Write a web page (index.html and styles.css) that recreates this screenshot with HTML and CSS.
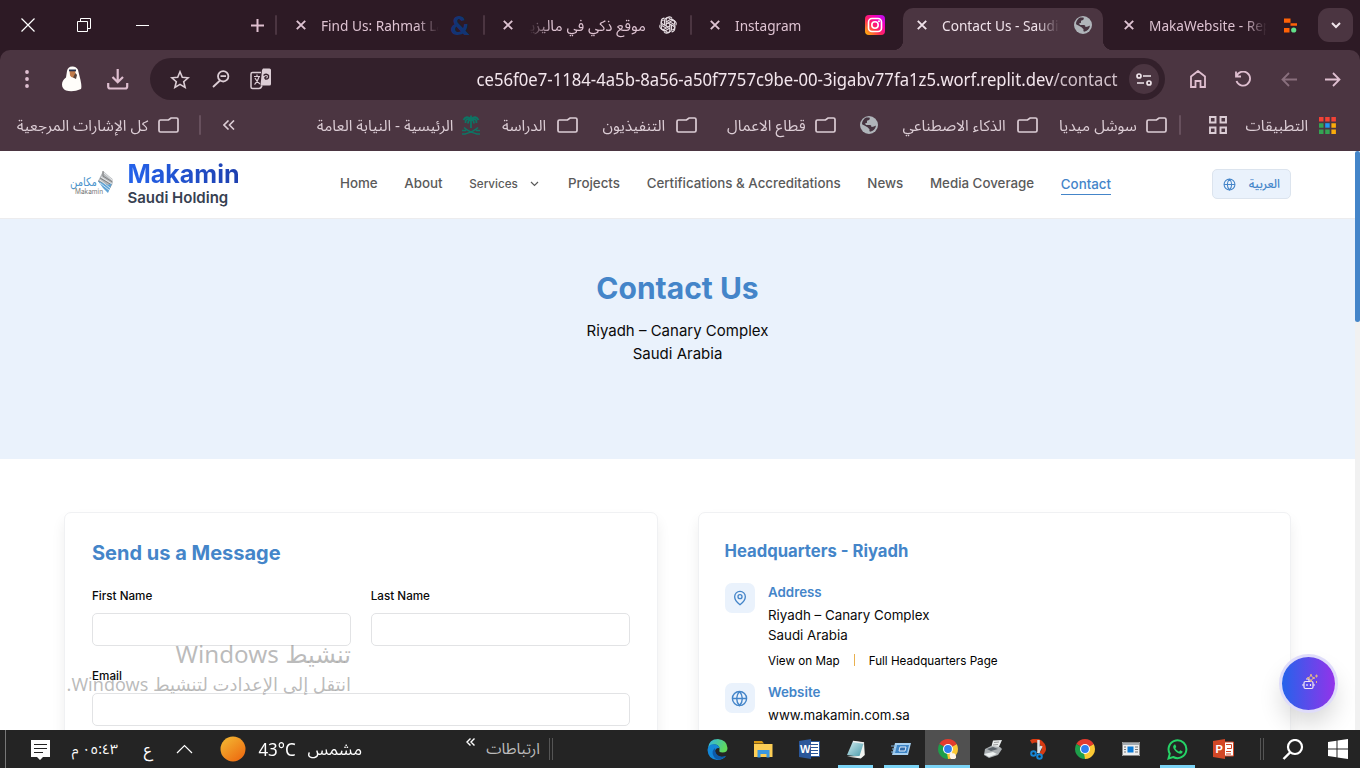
FILE: index.html
```html
<!DOCTYPE html>
<html lang="en">
<head>
<meta charset="utf-8">
<title>Contact Us - Saudi Holding</title>
<link rel="stylesheet" href="styles.css">
</head>
<body>
<svg width="0" height="0" class="defs">
  <defs>
    <linearGradient id="ig" x1="0" y1="1" x2="1" y2="0"><stop offset="0" stop-color="#ffc400"/><stop offset=".4" stop-color="#ff2a55"/><stop offset=".7" stop-color="#f500b5"/><stop offset="1" stop-color="#b010ff"/></linearGradient>
    <linearGradient id="sun" x1="0" y1="0" x2=".8" y2="1"><stop offset="0" stop-color="#f3bd35"/><stop offset="1" stop-color="#ee6a10"/></linearGradient>
    <linearGradient id="edge" x1="0" y1="0" x2="1" y2=".4"><stop offset="0" stop-color="#2fb4ea"/><stop offset="1" stop-color="#60d95a"/></linearGradient>
    <linearGradient id="note" x1="0" y1="0" x2="1" y2="1"><stop offset="0" stop-color="#d8f0f4"/><stop offset="1" stop-color="#4095a5"/></linearGradient>
    <symbol id="x" viewBox="0 0 10 10"><path d="M.8.8l8.4 8.4M9.2.8L.8 9.200" stroke="currentColor" stroke-width="1.9" fill="none"/></symbol>
    <symbol id="folder" viewBox="0 0 21 16"><path d="M1 4.500q0-1.500 1.500-1.500h8L13 1h5.500q1.500 0 1.500 1.500v11q0 1.500-1.500 1.500h-16Q1 15 1 13.500z" fill="none" stroke="currentColor" stroke-width="1.700"/></symbol>
    <symbol id="earth" viewBox="0 0 18 18"><circle cx="9" cy="9" r="9" fill="#b0b5ba"/><path d="M2 8q0-4 4-6.500h3.500q1 1.500-.5 2.500l-2 .8v2l-2 .7 1 1.500h4q1.500 0 1.500 2l2.500-.5q1-1 2-.8-1 5-6 6-1-1-.5-2.500l-2-2-3.500-2q-1.500-.2-2-1.200z" fill="#463440"/></symbol>
    <symbol id="chrome" viewBox="0 0 20 20"><path d="M10 10L1.340 5A10 10 0 0 1 18.660 5z" fill="#e33b2e"/><path d="M10 10L18.660 5A10 10 0 0 1 10 20z" fill="#fcc934"/><path d="M10 10L10 20A10 10 0 0 1 1.340 5z" fill="#1e9e4a"/><path d="M10 5h8.660L10 10z" fill="#e33b2e"/><path d="M14.500 12.500L10 20l-1-6z" fill="#fcc934"/><circle cx="10" cy="10" r="5" fill="#fff"/><circle cx="10" cy="10" r="3.900" fill="#2f7ef0"/></symbol>
    <symbol id="globe" viewBox="0 0 24 24"><g fill="none" stroke="currentColor" stroke-width="2"><circle cx="12" cy="12" r="10"/><path d="M2 12h20M12 2a14.500 14.500 0 0 0 0 20 14.500 14.500 0 0 0 0-20"/></g></symbol>
  </defs>
</svg>

<header class="browser">
  <div class="tabstrip">
    <svg class="ico white" width="14" height="14"><path d="M.5.5l13 13M13.500.5l-13 13" stroke="currentColor" stroke-width="1.200"/></svg>
    <svg class="ico white" width="14" height="14"><path d="M.5 3.500h10v10h-10zM3.500 3.500v-3h10v10h-3" fill="none" stroke="currentColor"/></svg>
    <svg class="ico white" width="13" height="14"><path d="M0 7.500h13" stroke="currentColor"/></svg>
    <svg class="ico pink plus" width="13" height="13"><path d="M6.500 0v13M0 6.500h13" stroke="currentColor" stroke-width="2"/></svg>
    <i class="sep"></i>
    <div class="tab"><svg class="ico" width="10" height="10"><use href="#x"/></svg><span class="ttl"><b class="lat">Find Us: Rahmat La</b></span><span class="amp">&amp;</span></div>
    <i class="sep"></i>
    <div class="tab"><svg class="ico" width="10" height="10"><use href="#x"/></svg><span class="ttl rtl"><b class="ar">موقع ذكي في ماليزيا</b></span>
      <svg class="ico" width="18" height="18" viewBox="0 0 24 24"><g fill="none" stroke="#e5dce1" stroke-width="1.500"><path id="p" d="M12 9.200L9.500 10.700V5.500a4.300 4.300 0 0 1 8-2.200M9.500 8l5-2.900a4.300 4.300 0 0 1 6 5.500"/><use href="#p" transform="rotate(60 12 12)"/><use href="#p" transform="rotate(120 12 12)"/><use href="#p" transform="rotate(180 12 12)"/><use href="#p" transform="rotate(240 12 12)"/><use href="#p" transform="rotate(300 12 12)"/></g></svg></div>
    <i class="sep"></i>
    <div class="tab"><svg class="ico" width="10" height="10"><use href="#x"/></svg><span class="ttl"><b class="lat">Instagram</b></span>
      <svg class="ico" width="20" height="20"><rect width="20" height="20" rx="4" fill="url(#ig)"/><g fill="none" stroke="#fff" stroke-width="1.600"><rect x="3.500" y="3.500" width="13" height="13" rx="3.500"/><circle cx="10" cy="10" r="3.200"/></g><circle cx="14" cy="6.200" r="1" fill="#fff"/></svg></div>
    <i></i>
    <div class="tab active"><svg class="ico" width="10" height="10"><use href="#x"/></svg><span class="ttl"><b class="lat">Contact Us - Saudi</b></span><svg class="ico" width="18" height="18"><use href="#earth"/></svg></div>
    <i></i>
    <div class="tab"><svg class="ico" width="10" height="10"><use href="#x"/></svg><span class="ttl"><b class="lat">MakaWebsite - Rep</b></span>
      <svg class="ico replit" width="13" height="15"><path d="M0 .5h6.500v4.300H0zM6.500 5.300H13v2.500H6.500zM0 10h5.500v4.500H0z" fill="#ff6207"/><circle cx="9.700" cy="12" r="2.600" fill="#62e08a"/></svg></div>
    <i></i>
    <div class="menu-btn"><svg width="10" height="7"><path d="M1 1l4 4 4-4" fill="none" stroke="#efe4ea" stroke-width="2"/></svg></div>
  </div>

  <div class="panel">
    <div class="toolbar">
      <svg class="ico pink dots" width="4" height="18"><circle cx="2" cy="2" r="1.900"/><circle cx="2" cy="9" r="1.900"/><circle cx="2" cy="16" r="1.900"/></svg>
      <svg class="ico" width="20" height="26"><path d="M5 5Q6 0 11 0.500q5 .5 5.500 5.500l2 8q1.500 7 .5 9-8 3.500-15 1.500-4-2-4-6 0-4 4-7z" fill="#fffdfa"/><path d="M7.500 4.500h6l-.5 6q-3 2.500-5-1z" fill="#c07a4a"/><path d="M7 3.500h7v1.800H7z" fill="#27334f"/><path d="M13.500 7l1.500 2-1 4-3-1.500" fill="#59453d"/></svg>
      <svg class="ico pink" width="22" height="21"><path d="M10.700 0v13M5.500 8l5.200 5.200L16 8M1.200 14v3.500q0 2 2 2h15q2 0 2-2V14" fill="none" stroke="currentColor" stroke-width="2.200"/></svg>
      <div class="omnibox">
        <svg class="ico" width="20" height="19"><path d="M10 1.800l2.300 5.500 5.900.5-4.500 3.900 1.400 5.700-5.100-3-5.100 3 1.400-5.700-4.500-3.900 5.900-.5z" fill="none" stroke="currentColor" stroke-width="1.600"/></svg>
        <svg class="ico" width="18" height="18"><path d="M8 10.500L1 17M8.500 6.200h5.500" stroke="currentColor" stroke-width="1.800"/><circle cx="11.200" cy="6.300" r="5.200" fill="none" stroke="currentColor" stroke-width="1.800"/></svg>
        <svg class="ico translate" width="22" height="22"><path d="M11 4.500H2.500Q1 4.500 1 6v13q0 1.500 1.500 1.500H9q2 0 3-3" fill="none" stroke="currentColor" stroke-width="1.500"/><path d="M13 .5h6.500Q21 .5 21 2v14q0 1.500-1.500 1.500H10.500L12 2z" fill="currentColor"/><path d="M13.500 7.500q3-2.500 5 0 .5 4-3 3.500-1.800-1.500 1.200-2.500" fill="none" stroke="#33202b" stroke-width="1.400"/><path d="M4 8.500h6M7 6.500v2M9 9q-1.500 5-4.500 7.500M5 10q2 4 5 6" fill="none" stroke="currentColor" stroke-width="1.200"/></svg>
        <span class="url"><b>ce56f0e7-1184-4a5b-8a56-a50f7757c9be-00-3igabv77fa1z5.worf.replit.dev<em>/contact</em></b></span>
        <span class="site"><svg width="16" height="13"><g fill="none" stroke="#f0e6eb" stroke-width="1.700"><circle cx="3" cy="3" r="2"/><path d="M7 3h8M1 10h7"/><circle cx="13" cy="10" r="2"/></g></svg></span>
      </div>
      <svg class="ico pink" width="16" height="18"><path d="M1 6.500L8 1l7 5.500V17h-4.500v-6h-5v6H1z" fill="none" stroke="currentColor" stroke-width="1.800"/></svg>
      <svg class="ico pink" width="17" height="17"><path d="M1 .5v5h5M1.500 5.200A7 7 0 1 1 1.500 10" fill="none" stroke="currentColor" stroke-width="1.800"/></svg>
      <svg class="ico dim" width="16" height="15"><path d="M16 7.500H1.500M8 1L1.500 7.500 8 14" fill="none" stroke="currentColor" stroke-width="1.800"/></svg>
      <svg class="ico pink" width="16" height="15"><path d="M0 7.500h14.500M8 1l6.500 6.500L8 14" fill="none" stroke="currentColor" stroke-width="1.800"/></svg>
    </div>
    <div class="bookmarks">
      <span class="bm"><b class="ar">كل الإشارات المرجعية</b></span><svg class="ico" width="21" height="16"><use href="#folder"/></svg>
      <i class="sep"></i>
      <svg class="ico" width="12" height="10"><path d="M5.500.5L1 5l4.500 4.500M11 .5L6.500 5 11 9.500" fill="none" stroke="currentColor" stroke-width="1.600"/></svg>
      <span class="bm"><b class="ar">الرئيسية - النيابة العامة</b></span>
      <svg class="ico" width="20" height="20"><g fill="none" stroke="#0e7464" stroke-width="1.500"><path d="M10 13V5M10 4Q5 0 2.500 5M10 4q5-4 7.500 1M10 4Q4 3 4.500 8M10 4q6-1 5.500 4M10 4Q7 5 7 8.500M10 4q3 1 3 4.500M10 4V.5" stroke-width="1.800"/><path d="M3 12.500q4 4 13 6.500h3M17 12.500q-4 4-13 6.500H1M1 15.500h4M15 15.500h4"/></g></svg>
      <span class="bm"><b class="ar">الدراسة</b></span><svg class="ico" width="21" height="16"><use href="#folder"/></svg>
      <span class="bm"><b class="ar">التنفيذيون</b></span><svg class="ico" width="21" height="16"><use href="#folder"/></svg>
      <span class="bm"><b class="ar">قطاع الاعمال</b></span><svg class="ico" width="21" height="16"><use href="#folder"/></svg>
      <svg class="ico" width="18" height="18"><use href="#earth"/></svg>
      <span class="bm"><b class="ar">الذكاء الاصطناعي</b></span><svg class="ico" width="21" height="16"><use href="#folder"/></svg>
      <span class="bm"><b class="ar">سوشل ميديا</b></span><svg class="ico" width="21" height="16"><use href="#folder"/></svg>
      <i class="sep"></i>
      <svg class="ico" width="18" height="18"><path d="M1 1h5.500v5.500H1zM11.500 1H17v5.500h-5.500zM1 11.500h5.500V17H1zM11.500 11.500H17V17h-5.500z" fill="none" stroke="currentColor" stroke-width="1.900"/></svg>
      <span class="bm"><b class="ar">التطبيقات</b></span>
      <svg class="ico" width="17" height="17"><path d="M0 0h4.500v4.500H0zM6.200 0h4.500v4.500H6.200zM12.400 0h4.500v4.500h-4.500z" fill="#f34236"/><path d="M0 6.200h4.500v4.500H0zM0 12.400h4.500v4.500H0zM6.200 12.400h4.500v4.500H6.200z" fill="#34a353"/><path d="M6.200 6.200h4.500v4.500H6.200z" fill="#2196f3"/><path d="M12.400 6.200h4.500v4.500h-4.500zM12.400 12.400h4.500v4.500h-4.500z" fill="#fbab0b"/></svg>
    </div>
  </div>
</header>

<main class="viewport">
  <div class="page">
    <div class="nav">
      <a class="brand">
        <svg width="43" height="28" viewBox="0 0 43 28"><text x="0" y="16" class="logo-ar" textLength="27" lengthAdjust="spacingAndGlyphs">مكامن</text><text x="5" y="24" class="logo-en" textLength="28" lengthAdjust="spacingAndGlyphs">Makamin</text><path d="M33 1l9.500 8v5L38 22l-.5-6L28 11z" fill="#b4b8bc"/><path d="M33 1v5l9.500 6M30 8l12 7M28 11l13 6" stroke="#808080" fill="none"/><path d="M28 11l10 4 4-2-4 10-5-5z" fill="#5ea3d6"/><path d="M34 3l8 7M31 7l11 7M30 10l10 8M30 13l9 7" stroke="#fff" stroke-width=".7"/></svg>
        <span class="brand-text"><strong>Makamin</strong><small>Saudi Holding</small></span>
      </a>
      <nav class="links">
        <a>Home</a><a>About</a><a class="services">Services <svg width="9" height="6"><path d="M1 1l3.500 3.500L8 1" fill="none" stroke="currentColor" stroke-width="1.200"/></svg></a><a>Projects</a><a>Certifications &amp; Accreditations</a><a>News</a><a>Media Coverage</a><a class="current">Contact</a>
      </nav>
      <button class="lang"><svg width="13" height="13"><use href="#globe"/></svg><b class="ar">العربية</b></button>
    </div>
    <section class="hero">
      <h1>Contact Us</h1>
      <p>Riyadh – Canary Complex<br>Saudi Arabia</p>
    </section>
    <section class="cards">
      <form class="card">
        <h2>Send us a Message</h2>
        <div class="row">
          <label>First Name<input></label>
          <label>Last Name<input></label>
        </div>
        <label>Email<input></label>
      </form>
      <div class="card office-card">
        <h3>Headquarters - Riyadh</h3>
        <div class="info">
          <span class="badge"><svg width="16" height="16" viewBox="0 0 24 24" fill="none" stroke="currentColor" stroke-width="2"><path d="M20 10c0 6-8 12-8 12s-8-6-8-12a8 8 0 0 1 16 0"/><circle cx="12" cy="10" r="3"/></svg></span>
          <div><h4>Address</h4><p>Riyadh – Canary Complex<br>Saudi Arabia</p><div class="more"><a>View on Map</a><i></i><a>Full Headquarters Page</a></div></div>
        </div>
        <div class="info">
          <span class="badge"><svg width="17" height="17"><use href="#globe"/></svg></span>
          <div><h4>Website</h4><p>www.makamin.com.sa</p></div>
        </div>
      </div>
    </section>
  </div>
  <div class="scrollbar"><div class="thumb"></div></div>
  <div class="watermark"><p class="big">تنشيط Windows</p><p class="small">انتقل إلى الإعدادت لتنشيط Windows.</p></div>
  <div class="chat"><svg width="18" height="18"><g fill="none" stroke="#f3e8f4" stroke-width="1.200"><rect x="3" y="8.500" width="9" height="7" rx="1.500"/><path d="M1 12h2M12 12h2M6 11v2M9.500 11v2M5 6h3v2.500"/></g><path d="M10 1l1 3 3 1-3 1-1 3-1-3-3-1 3-1zM15.500 1.500v3M14 3h3M15.500 8v2" fill="none" stroke="#dcb08c"/></svg></div>
</main>

<footer class="taskbar">
  <i class="edge"></i>
  <svg class="ico note" width="21" height="21"><path d="M1 1h19v17h-7l-3 3-3-3H1z" fill="#fff"/><path d="M4 5.500h13M4 9.500h13M4 13.500h9" stroke="#222" stroke-width="1.100"/></svg>
  <span class="rt clock"><b class="ar">٠٥:٤٣ م</b></span>
  <span class="rt lg"><b class="ar">ع</b></span>
  <svg class="ico" width="17" height="10"><path d="M1 9l7.500-7.500L16 9" fill="none" stroke="#fff" stroke-width="1.200"/></svg>
  <svg class="ico" width="26" height="26"><circle cx="13" cy="13" r="12.500" fill="url(#sun)"/></svg>
  <span class="temp"><b>43°C</b></span>
  <span class="rt sunny"><b class="ar">مشمس</b></span>
  <svg class="ico more-links" width="9" height="8"><path d="M4.500.5L1 4l3.500 3.500M8.500.5L5 4l3.500 3.500" fill="none" stroke="#fff" stroke-width="1.400"/></svg>
  <span class="rt grey"><b class="ar">ارتباطات</b></span>
  <i class="dbl"></i>
  <div class="apps">
    <span><svg width="21" height="21"><path d="M1 9Q2 0 11 0q9 1 9.500 9 0 4.500-5 4.500-4 0-3-2.500Q13 6 8 5.500 3 5.500 1 9z" fill="url(#edge)"/><path d="M.5 11Q1 5 7 5.200q5 .3 5.500 4Q9 8.500 8 12q0 5 6 6 3 0 5-1-3 4-9 4Q1 20 .5 11z" fill="#1387d8"/><path d="M8 9q-4 3-1.500 8 2 4 6 3.700 4-.8 6.500-3.700-5 1.500-8-.5Q7.500 14 8 9z" fill="#0d5aa8"/></svg></span>
    <span><svg width="19" height="17"><path d="M0 0h8l2 2.500H0z" fill="#d99a13"/><path d="M0 3h18.500v13H0z" fill="#fdce55"/><path d="M3.500 16.500V9h12v7.500h-3V13h-6v3.500z" fill="#3b98e0"/></svg></span>
    <span><svg width="21" height="20"><path d="M11 2.500h9.500v15H11z" fill="#fff" stroke="#2b579a"/><path d="M12 5.500h7M12 8.500h7M12 11.500h7M12 14.500h7" stroke="#2b579a"/><path d="M0 2L12 0v20L0 18z" fill="#2b579a"/><text x="1" y="14" class="office">W</text></svg></span>
    <span class="open two"><svg width="19" height="19"><path d="M7 1l11 1.500-3 14.500L1 15z" fill="url(#note)"/><path d="M18 2l.8 13-4 3.500L1 16.500l12.500-.5z" fill="#f0f3f0"/><path d="M7 1.500l11 1.500" stroke="#efefef" stroke-width="1.500"/></svg></span>
    <span class="open"><svg width="21" height="14"><path d="M4 1h16l-3 12H1z" fill="#a6cff0"/><path d="M6 3h12l-2 8H4z" fill="#3d84c6"/><path d="M9 5h6l-1 4H8z" fill="#316ba9" stroke="#dceafa"/><path d="M0 4h6M1 7h4M0 10h4" stroke="#7fb2dc"/></svg></span>
    <span class="open on"><svg width="20" height="20"><use href="#chrome"/><path d="M13 20q-2-3-1-5 0-2 1.500-2 1 0 1 1.500 3-1 3.500 2.500v2q-2 2-5 1z" fill="#fff4e6"/></svg></span>
    <span><svg width="20" height="18"><path d="M10 .5L19 0l-4 9-7-1z" fill="#e8ecec"/><path d="M2 9l6-3 9 1 2 2-4 6-9 3-5-3z" fill="#a9aeb1"/><path d="M4 9l6-2 5 2-7 2z" fill="#596168"/><path d="M1 14l9-2 4 2-8 3z" fill="#eef2f2"/><path d="M11 2.500l5-.5M10 5l5-.5" stroke="#999"/></svg></span>
    <span><svg width="18" height="21"><path d="M1 3q7-4 12 3 3 6-3 9" fill="none" stroke="#d83b12" stroke-width="4"/><path d="M8.500 1v13M11.500 7L8 14" stroke="#dde2e5" stroke-width="2.500"/><g fill="none" stroke="#1687d6" stroke-width="2"><circle cx="3.500" cy="14.500" r="2.300"/><circle cx="9.500" cy="17.500" r="2.300"/></g></svg></span>
    <span><svg width="20" height="20"><use href="#chrome"/></svg></span>
    <span><svg width="18" height="14"><path d="M0 0h18v14H0z" fill="#eee"/><path d="M.5.5h17v13H.5z" fill="none" stroke="#888"/><path d="M1 2h16" stroke="#8b949c" stroke-width="1.500"/><path d="M5.500 4.500h6v6h-6z" fill="#0b7ad6"/><path d="M2 5h2M2 7.500h2M2 10h2M13 5h3M13 7.500h3M13 10h3" stroke="#777"/></svg></span>
    <span class="open"><svg width="21" height="21"><path d="M1.500 19.500l1.300-4.800A8.900 8.900 0 1 1 6.200 18z" fill="none" stroke="#25d366" stroke-width="2"/><path d="M7.500 5.500q-2 1-1.200 3.500Q8.500 13.500 13 14.800q2.500.2 2.700-2.300l-2.400-1.200-1.300 1.400Q9.500 11.800 8.300 9.200l1-1.200-1-2.500z" fill="#25d366"/></svg></span>
    <span><svg width="21" height="20"><path d="M11 3h9.500v14H11z" fill="#fff" stroke="#d24726"/><path d="M13 5.500h5.500v4H14M13 12.500h5M13 15h5" fill="none" stroke="#d24726"/><path d="M0 2L12 0v20L0 18z" fill="#d24726"/><text x="2.500" y="14" class="office">P</text></svg></span>
  </div>
  <i class="dbl"></i>
  <svg class="ico" width="22" height="21"><circle cx="13" cy="8" r="7" fill="none" stroke="#fff" stroke-width="2.200"/><path d="M8.500 13L1.500 20" stroke="#fff" stroke-width="2.400"/></svg>
  <svg class="ico" width="20" height="20"><path d="M0 3l8.500-1.200v7.700H0zM9.500 1.600L20 0v9.500H9.500zM0 10.500h8.500v7.700L0 17zM9.500 10.500H20V20L9.500 18.400z" fill="#fff"/></svg>
</footer>
</body>
</html>
```
FILE: styles.css
```css
* { box-sizing: border-box; }
body { margin: 0; width: 1360px; height: 768px; overflow: hidden; display: flex; flex-direction: column; font-family: Inter, "Noto Sans", "DejaVu Sans", sans-serif; background: #fff; }
.defs { position: absolute; }
h1, h2, h3, h4, p { margin: 0; }
b { font-weight: 400; display: inline-block; white-space: nowrap; }
em { font-style: normal; }
.ico { display: block; justify-self: center; }
.ar { font-family: "Noto Sans Arabic", "DejaVu Sans", sans-serif; direction: rtl; transform-origin: right center; }

/* browser chrome */
.browser { height: 151px; background: #2d1a25; font-family: "Noto Sans", "DejaVu Sans", sans-serif; color: #dec3d2; flex: none; }
.tabstrip { height: 50px; display: grid; align-items: center; grid-template-columns: 56px 56px 60px 100px 10px 200px 7px 200px 7px 200px 7px 200px 7px 200px 8px 36px; }
.white { color: #fff; }
.pink { color: #dfbfd0; fill: #dfbfd0; }
.dim { color: #896f7d; }
.plus { margin-left: 70px; }
.sep { width: 2px; height: 20px; background: #4b3541; justify-self: center; border-radius: 1px; }
.tabstrip .sep { margin-right: 3px; }
.tab { height: 50px; display: grid; grid-template-columns: 38px 120px 42px; align-items: center; }
.tab .ttl { margin-left: 1px; }
.tab.active { background: #4b3541; height: 42px; border-radius: 10px 10px 0 0; align-self: end; color: #f0e2ea; padding-bottom: 8px; width: 200px; position: relative; }
.tab.active::before, .tab.active::after { content: ""; position: absolute; bottom: 0; width: 10px; height: 10px; }
.tab.active::before { left: -10px; background: radial-gradient(circle at 0 0, transparent 10px, #4b3541 10.5px); }
.tab.active::after { right: -10px; background: radial-gradient(circle at 100% 0, transparent 10px, #4b3541 10.5px); }
.active .ico:last-child { margin-left: 2px; }
.replit { margin-left: 2px; }
.ttl { font-size: 15px; overflow: hidden; line-height: 26px; height: 26px; mask-image: linear-gradient(to right, #000 80%, transparent 99%); }
.ttl.rtl { direction: rtl; mask-image: linear-gradient(to left, #000 80%, transparent 99%); }
.ttl.rtl .ar { margin-right: 1px; }
.lat { transform: scaleX(.91); transform-origin: left center; }
.amp { justify-self: center; font: 800 26px/26px Lato, sans-serif; color: #123474; margin-right: 2px; }
.menu-btn { width: 35px; height: 34px; border-radius: 11px; background: #4b3541; display: grid; place-items: center; }
.panel { height: 101px; background: #4b3541; border-radius: 10px 10px 0 0; padding-top: 8px; }
.toolbar { height: 42px; display: grid; align-items: center; grid-template-columns: 54px 36px 55px 1025px 55px 36px 55px 33px; }
.omnibox { height: 42px; width: 1015px; margin-left: 5px; background: #33202b; border-radius: 21px; display: grid; align-items: center; grid-template-columns: 60px 22px 56px 829px 48px; color: #dccdd5; }
.translate { margin-left: 2px; }
.url { display: flex; justify-content: flex-end; font-size: 17.500px; color: #f3e6ed; }
.url b { transform: scaleX(.953); transform-origin: right center; }
.url em { color: #d0c0c9; }
.site { width: 30px; height: 30px; border-radius: 50%; background: #4b3541; display: grid; place-items: center; justify-self: center; margin-left: 6px; }
.bookmarks { height: 50px; display: grid; align-items: center; grid-template-columns: 148px 42px 20px 38px 205px 36px 57px 44px 75px 44px 97px 40px 46px 114px 44px 87px 40px 5px 72px 54px 40px; color: #dccdd5; }
.bookmarks .sep { background: #67505d; }
.bookmarks .ico { margin-right: 1px; }
.bm { direction: rtl; font-size: 15px; line-height: 24px; }
.bm .ar { transform: scaleX(1.025); }

/* web page */
.viewport { height: 579px; display: flex; position: relative; overflow: hidden; flex: none; }
.page { width: 1355px; }
.scrollbar { width: 5px; background: #f1f1f1; }
.thumb { height: 171px; background: #4485c9; border-radius: 3px; }
.nav { height: 68px; border-bottom: 1px solid #ececee; display: flex; align-items: center; padding: 0 64px 0 70px; }
.brand { display: flex; width: 270px; gap: 14.500px; align-items: center; margin-top: -1px; }
.brand > svg { margin-top: -1px; }
.brand-text { display: flex; flex-direction: column; }
.brand strong { font-size: 25px; line-height: 26px; font-weight: 700; color: transparent; background: linear-gradient(90deg, #2563eb, #1e40af); background-clip: text; align-self: flex-start; }
.brand small { font-size: 15px; line-height: 20px; font-weight: 600; color: #374151; margin-top: 1px; }
.logo-ar { font: 400 12px "DejaVu Sans"; fill: #4a93cc; }
.logo-en { font: 7px Inter; fill: #777; }
.links { display: flex; gap: 26.670px; align-items: center; font-size: 13.330px; font-weight: 500; color: #5a5a5a; width: 872px; white-space: nowrap; margin-top: -3px; }
.services { font-size: 11.670px; display: flex; align-items: center; gap: 12px; margin: 2px 2.500px 0 0; }
.current { color: #4485c9; border-bottom: 1px solid #4485c9; padding: 2px 0 2px; margin-top: 2px; }
.lang { width: 79px; height: 30px; margin-top: -1px; background: #eaf2fc; border: 1px solid #dce4ee; border-radius: 5px; color: #4485c9; display: flex; align-items: center; justify-content: space-between; padding: 0 10px; font-size: 12px; }
.lang .ar { font-weight: 500; }
.hero { height: 240px; background: #eaf2fc; text-align: center; padding-top: 49px; }
.hero h1 { font-size: 30px; line-height: 40px; font-weight: 700; color: #4485c9; }
.hero p { font-size: 15px; line-height: 23.300px; margin-top: 11px; color: #0a0a0a; }
.cards { padding: 53px 64px 0; display: grid; grid-template-columns: 1fr 1fr; gap: 40px; }
.card { height: 400px; border: 1px solid #f0f1f3; border-radius: 7px; padding: 27px; box-shadow: 0 8px 14px rgba(0,0,0,.07); }
.office-card { padding-left: 26px; }
.card h2 { font-size: 20px; line-height: 26px; color: #4485c9; font-weight: 700; margin-bottom: 22px; }
.row { display: grid; grid-template-columns: 1fr 1fr; gap: 20px; margin-bottom: 22px; }
label { display: block; font-size: 11.670px; line-height: 16px; font-weight: 500; color: #0a0a0a; }
input { display: block; width: 100%; height: 33px; border: 1px solid #e2e3e5; border-radius: 5px; margin-top: 9px; background: #fff; }
.card h3 { font-size: 16.670px; line-height: 23px; font-weight: 700; color: #4485c9; margin-bottom: 20px; }
.info { display: flex; gap: 13.500px; height: 100px; }
.badge { width: 30px; height: 30px; border-radius: 7px; background: #eaf2fc; color: #4485c9; display: grid; place-items: center; }
.info h4 { font-size: 13.330px; line-height: 20px; font-weight: 600; color: #4485c9; margin-top: -1px; }
.info p { font-size: 13.330px; line-height: 20px; color: #0a0a0a; margin-top: 3px; }
.more { display: flex; align-items: center; gap: 14px; font-size: 11.670px; line-height: 16px; margin-top: 8px; }
.more i { width: 1px; height: 12px; background: #e9b04f; margin-top: -3px; }
.watermark { position: absolute; right: 1009px; top: 486px; direction: rtl; color: rgba(120,120,120,.5); font-family: "Noto Sans", "DejaVu Sans"; white-space: nowrap; text-align: right; transform-origin: right top; }
.big { font-size: 24.200px; line-height: 34px; }
.small { font-size: 18px; line-height: 26px; }
.chat { position: absolute; left: 1282px; top: 506px; width: 53px; height: 53px; border-radius: 50%; background: linear-gradient(90deg, #2563eb, #9333ea); box-shadow: 0 0 0 3px #dfdcfa, 0 14px 24px rgba(0,0,0,.16); display: grid; place-items: center; padding: 0 0 4px 2px; }

/* taskbar */
.taskbar { height: 38px; background: #242424; flex: none; display: grid; align-items: center; color: #fff; font-family: "Noto Sans", "DejaVu Sans", sans-serif; grid-template-columns: 11px 59px 48px 36px 62px 34px 47px 65px 113px 65px 22px 133px 552px 30px 31px 60px; }
.taskbar { grid-template-columns: 11px 59px 48px 35px 63px 34px 46px 66px 113px 65px 22px 133px 552px 30px 31px 60px; }
.edge { width: 1px; height: 38px; background: #777; margin-left: 5px; }
.rt { direction: rtl; font-size: 14px; }
.lg, .sunny { font-size: 16.500px; }
.lg { padding-right: 1px; }
.sunny .ar { transform: scaleX(1.030); }
.temp { font-size: 18px; text-align: right; }
.temp b { transform: scaleX(.94); transform-origin: right; }
.more-links { align-self: start; margin-top: 8px; justify-self: end; }
.grey { color: #bbb; font-size: 15.500px; }
.dbl { width: 4px; height: 22px; border: solid #555; border-width: 0 1px; justify-self: center; }
.apps { display: grid; grid-template-columns: repeat(12, 46px); height: 38px; grid-column: 13; margin-left: -1px; }
.apps span { display: grid; place-items: center; background: linear-gradient(#7bd4f6, #7bd4f6) center bottom / 0 3px no-repeat; }
.apps .open { background-size: 35px 3px; }
.apps .on { width: 45px; margin-left: 1px; background-color: #505050; background-size: 45px 3px; }
.office { font: 700 11px "Liberation Sans"; fill: #fff; }
```
